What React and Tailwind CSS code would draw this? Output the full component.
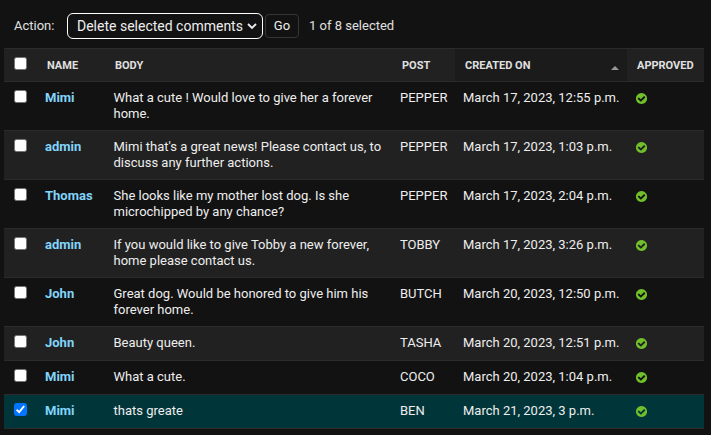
import { useState } from 'react';

const comments = [
  { name: 'Mimi', body: ['What a cute ! Would love to give her a forever', 'home.'], post: 'PEPPER', date: 'March 17, 2023, 12:55 p.m.' },
  { name: 'admin', body: ["Mimi that's a great news! Please contact us, to", 'discuss any further actions.'], post: 'PEPPER', date: 'March 17, 2023, 1:03 p.m.' },
  { name: 'Thomas', body: ['She looks like my mother lost dog. Is she', 'microchipped by any chance?'], post: 'PEPPER', date: 'March 17, 2023, 2:04 p.m.' },
  { name: 'admin', body: ['If you would like to give Tobby a new forever,', 'home please contact us.'], post: 'TOBBY', date: 'March 17, 2023, 3:26 p.m.' },
  { name: 'John', body: ['Great dog. Would be honored to give him his', 'forever home.'], post: 'BUTCH', date: 'March 20, 2023, 12:50 p.m.' },
  { name: 'John', body: ['Beauty queen.'], post: 'TASHA', date: 'March 20, 2023, 12:51 p.m.' },
  { name: 'Mimi', body: ['What a cute.'], post: 'COCO', date: 'March 20, 2023, 1:04 p.m.' },
  { name: 'Mimi', body: ['thats greate'], post: 'BEN', date: 'March 21, 2023, 3 p.m.' },
];

const columns = 'grid grid-cols-[33px_69px_286px_63px_172px_77px]';

function Checkbox({ checked, onChange, label }) {
  return (
    <button
      type="button"
      role="checkbox"
      aria-checked={checked}
      aria-label={label}
      onClick={onChange}
      className={`block size-[13px] rounded-[2.5px] border ${checked ? 'border-[#0075ff] bg-[#0075ff]' : 'border-[#767676] bg-white'}`}
    >
      {checked && (
        <svg viewBox="0 0 11 11" className="block size-[11px]" fill="none" stroke="#fff" strokeWidth="1.9">
          <path d="M1.6 5.8 4.2 8.2 9.2 2" />
        </svg>
      )}
    </button>
  );
}

function ApprovedIcon() {
  return (
    <svg viewBox="0 0 1792 1792" className="block size-[13px]" fill="#70bf2b" role="img" aria-label="True">
      <path d="M1412 734q0-28-18-46l-91-90q-19-19-45-19t-45 19l-408 407-226-226q-19-19-45-19t-45 19l-91 90q-18 18-18 46 0 27 18 45l362 362q19 19 45 19 27 0 46-19l543-543q18-18 18-45zm252 162q0 209-103 385.500t-279.500 279.500-385.500 103-385.500-103-279.500-279.500-103-385.500 103-385.500 279.500-279.500 385.500-103 385.500 103 279.500 279.500 103 385.500z" />
    </svg>
  );
}

export default function App() {
  const [selected, setSelected] = useState([7]);
  const toggle = (i) => setSelected((s) => (s.includes(i) ? s.filter((n) => n !== i) : [...s, i]));
  const all = selected.length === comments.length;

  return (
    <div className="h-[435px] w-[711px] overflow-hidden bg-[#121212] pl-1 font-['Roboto',sans-serif] text-[13px] leading-4 text-[#eeeeee]">
      <div className="flex h-12 items-center pt-1 pl-2.5 text-[#e0e0e0]">
        <span className="w-[53px]">Action:</span>
        <button type="button" className="flex h-[26px] w-[196px] items-center justify-between rounded-md border border-white pr-[5px] pl-[9px] text-sm whitespace-nowrap text-[#eeeeee]">
          Delete selected comments
          <svg viewBox="0 0 10 8" className="h-2 w-2.5" fill="none" stroke="#eee" strokeWidth="1.8">
            <path d="m1 2 4 4 4-4" />
          </svg>
        </button>
        <button type="button" className="ml-0.5 flex h-6 w-[34px] items-center justify-center rounded border border-[#353535] text-[13px] text-[#eeeeee]">Go</button>
        <span className="ml-2.5">{selected.length} of 8 selected</span>
      </div>

      <div className="w-[700px]">
        <div className={`${columns} h-[33px] border-t border-[#2b2b2b] bg-[#212121] text-[11px] font-bold text-[#e0e0e0]`}>
          <div className="pt-2 pl-2.5">
            <Checkbox checked={all} onChange={() => setSelected(all ? [] : comments.map((_, i) => i))} label="Select all comments" />
          </div>
          <div className="pt-[9px] pl-2.5">NAME</div>
          <div className="pt-[9px] pl-[9px]">BODY</div>
          <div className="pt-[9px] pl-2.5">POST</div>
          <div className="flex justify-between bg-[#1b1b1b] pt-[9px] pr-2 pl-2.5">
            CREATED ON
            <svg viewBox="0 0 8 4" className="mt-2 h-1 w-2" fill="#999"><path d="M4 0 8 4H0Z" /></svg>
          </div>
          <div className="pt-[9px] pl-2.5">APPROVED</div>
        </div>

        {comments.map((c, i) => {
          const on = selected.includes(i);
          const color = on ? 'bg-[#00363a]' : i % 2 ? 'bg-[#212121]' : 'bg-[#121212]';
          const height = c.body.length > 1 ? 'h-[49px]' : 'h-[34px]';
          return (
            <div key={i} className={`${columns} ${color} ${height} border-t border-[#2b2b2b] pt-2`}>
              <div className="pl-2.5"><Checkbox checked={on} onChange={() => toggle(i)} label={`Select ${c.name}`} /></div>
              <a href="#" className="pl-2 font-bold text-[#81d4fa]">{c.name}</a>
              <div className="pl-[7.5px] whitespace-nowrap">{c.body.map((line) => <div key={line}>{line}</div>)}</div>
              <div className="pl-2">{c.post}</div>
              <div className="pl-2 whitespace-nowrap">{c.date}</div>
              <div className="pt-0.5 pl-2"><ApprovedIcon /></div>
            </div>
          );
        })}
        <div className="h-px bg-[#2b2b2b]" />
      </div>
    </div>
  );
}
